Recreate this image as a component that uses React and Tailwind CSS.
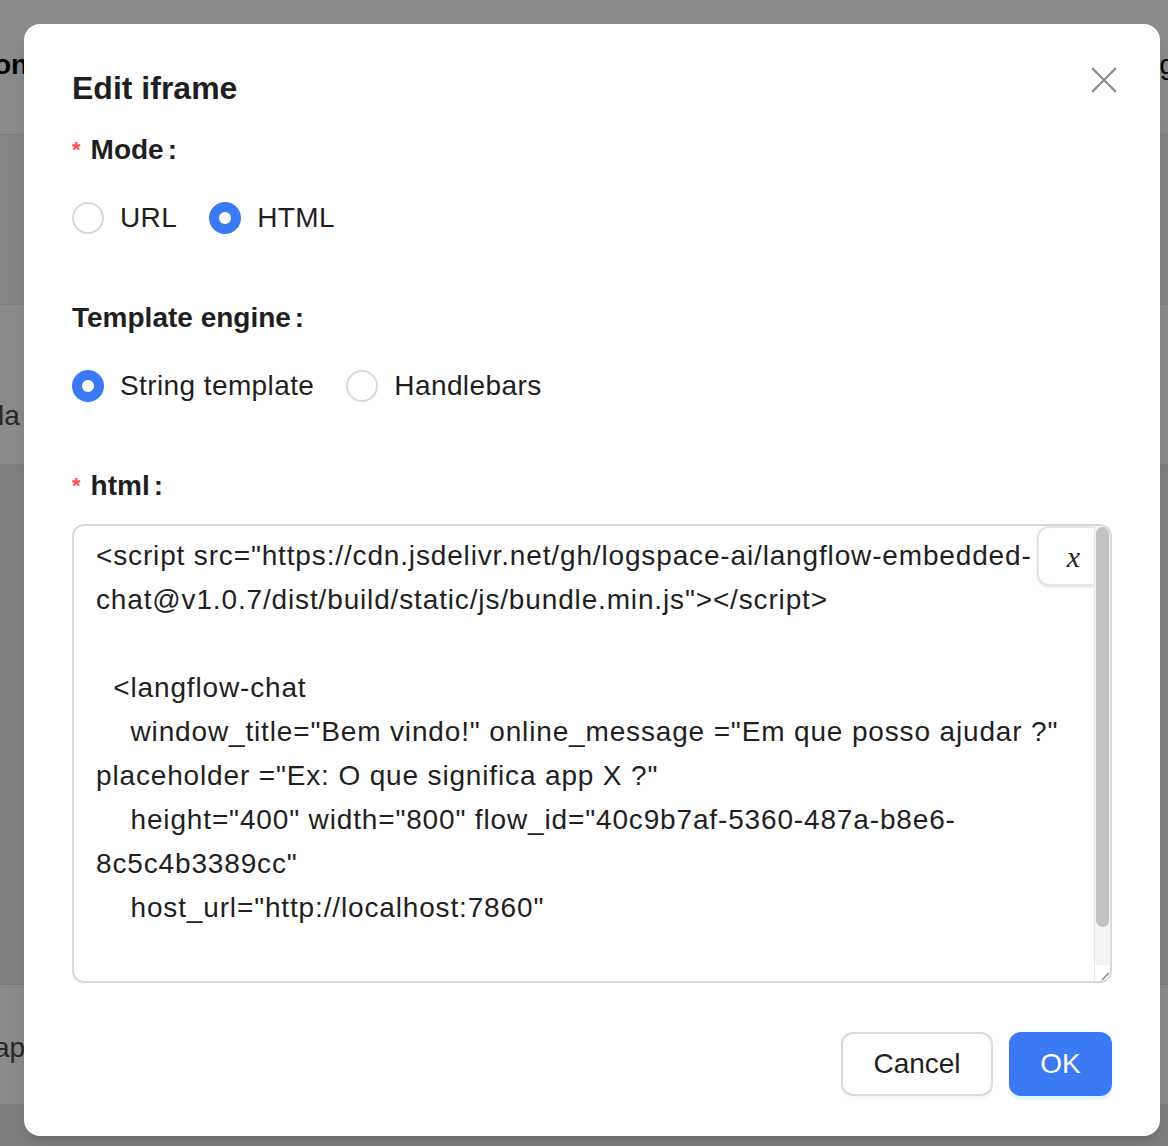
import { useState } from 'react'

const sans = { fontFamily: '"Liberation Sans", Arial, sans-serif' }

const htmlLines = [
  '<script src="https://cdn.jsdelivr.net/gh/logspace-ai/langflow-embedded-',
  'chat@v1.0.7/dist/build/static/js/bundle.min.js"></script>',
  '',
  '  <langflow-chat',
  '    window_title="Bem vindo!" online_message ="Em que posso ajudar ?"',
  'placeholder ="Ex: O que significa app X ?"',
  '    height="400" width="800" flow_id="40c9b7af-5360-487a-b8e6-',
  '8c5c4b3389cc"',
  '    host_url="http://localhost:7860"',
]

function Label({ required, children }) {
  return (
    <div className="h-[44px] flex items-center mb-[16px] text-[28px] font-bold text-[#1f1f1f]">
      {required ? (
        <span className="text-[#ff4d4f] text-[22px] mr-[10px] leading-none" style={{ fontFamily: 'SimSun, "Liberation Sans", sans-serif' }}>
          *
        </span>
      ) : null}
      <span>{children}</span>
      <span className="ml-[4px]">:</span>
    </div>
  )
}

function Radio({ checked, label, onClick }) {
  return (
    <button type="button" onClick={onClick} className="flex items-center mr-[16px] cursor-pointer">
      {checked ? (
        <span className="w-[32px] h-[32px] rounded-full bg-[#3b79f5] flex items-center justify-center">
          <span className="w-[12px] h-[12px] rounded-full bg-white" />
        </span>
      ) : (
        <span className="w-[32px] h-[32px] rounded-full border-2 border-[#d9d9d9] bg-white" />
      )}
      <span className="px-[16px] text-[28px] tracking-[0.4px] text-[#1f1f1f]">{label}</span>
    </button>
  )
}

function RadioGroup({ options, value, onChange }) {
  return (
    <div className="h-[60px] flex items-center">
      {options.map((o) => (
        <Radio key={o} label={o} checked={value === o} onClick={() => onChange(o)} />
      ))}
    </div>
  )
}

function Background() {
  return (
    <div className="absolute inset-0 flex flex-col">
      <div className="h-[135px] bg-[#fbfbfb] border-b border-[#e6e6e6] flex justify-between pt-[44px]">
        <span className="-ml-[6px] text-[28px] font-bold text-black">on</span>
        <span className="-mr-[7px] text-[28px] text-black">g</span>
      </div>
      <div className="h-[170px] bg-[#f2f2f2] border-b border-[#e6e6e6]" />
      <div className="h-[160px] bg-[#fbfbfb] border-b border-[#e6e6e6] pt-[90px]">
        <span className="-ml-[2px] text-[28px] text-[#4a4a4a]">la</span>
      </div>
      <div className="h-[520px] bg-[#e9e9e9] border-b border-[#dcdcdc]" />
      <div className="h-[120px] bg-[#fafafa] border-b border-[#e6e6e6] flex items-center pt-[6px]">
        <span className="-ml-[6px] text-[28px] text-[#4a4a4a]">ap</span>
      </div>
      <div className="flex-1 bg-[#e5e5e5]" />
    </div>
  )
}

export default function App() {
  const [mode, setMode] = useState('HTML')
  const [engine, setEngine] = useState('String template')

  return (
    <div className="relative w-[1168px] h-[1146px] overflow-hidden" style={sans}>
      <Background />
      <div className="absolute inset-0 bg-black/45" />

      <div className="absolute left-[24px] top-[24px] w-[1136px] h-[1112px] bg-white rounded-[16px] shadow-lg px-[48px] pt-[40px] pb-[40px] flex flex-col">
        <button type="button" className="absolute top-[34px] right-[34px] w-[44px] h-[44px] flex items-center justify-center">
          <svg width="26" height="26" viewBox="0 0 26 26" fill="none" stroke="#8c8c8c" strokeWidth="2.4">
            <path d="M1 1 L25 25 M25 1 L1 25" />
          </svg>
        </button>

        <div className="h-[48px] flex items-center mb-[16px] text-[32px] font-bold text-[#1f1f1f]">Edit iframe</div>

        <Label required>Mode</Label>
        <RadioGroup options={['URL', 'HTML']} value={mode} onChange={setMode} />

        <div className="mt-[48px]">
          <Label>Template engine</Label>
          <RadioGroup options={['String template', 'Handlebars']} value={engine} onChange={setEngine} />
        </div>

        <div className="mt-[48px]">
          <Label required>html</Label>
          <div className="relative h-[459px] border-2 border-[#d9d9d9] rounded-[12px] overflow-hidden bg-white">
            <div className="pt-[8px] pl-[22px] text-[28px] leading-[44px] tracking-[0.85px] text-[#1f1f1f]">
              {htmlLines.map((line, i) => (
                <div key={i} className="whitespace-pre h-[44px]">
                  {line}
                </div>
              ))}
            </div>

            <div className="absolute top-0 right-0 w-[73px] h-[60px] bg-white border-2 border-[#e6e6e6] rounded-[12px] shadow-sm flex items-center justify-center">
              <span className="text-[30px] italic text-[#262626]" style={{ fontFamily: '"Liberation Serif", "Times New Roman", serif' }}>
                x
              </span>
            </div>

            <div className="absolute top-0 right-0 bottom-0 w-[16px] bg-[#f4f4f4] border-l border-[#e8e8e8] flex flex-col">
              <div className="h-[400px] mt-[1px] mx-[1px] rounded-full bg-[#c1c1c1]" />
              <div className="flex-1" />
              <div className="h-[16px] bg-white flex items-end justify-end">
                <svg width="10" height="10" viewBox="0 0 10 10" stroke="#777" strokeWidth="1.2">
                  <path d="M2 9 L9 2 M6 9 L9 6" />
                </svg>
              </div>
            </div>
          </div>
        </div>

        <div className="mt-auto flex justify-end gap-[16px]">
          <button
            type="button"
            className="w-[152px] h-[64px] rounded-[12px] border-2 border-[#d9d9d9] bg-white text-[28px] text-[#1f1f1f] shadow-[0_4px_0_rgba(0,0,0,0.02)]"
          >
            Cancel
          </button>
          <button
            type="button"
            className="w-[103px] h-[64px] rounded-[12px] bg-[#3b79f5] text-[28px] text-white shadow-[0_4px_0_rgba(5,145,255,0.1)]"
          >
            OK
          </button>
        </div>
      </div>
    </div>
  )
}
